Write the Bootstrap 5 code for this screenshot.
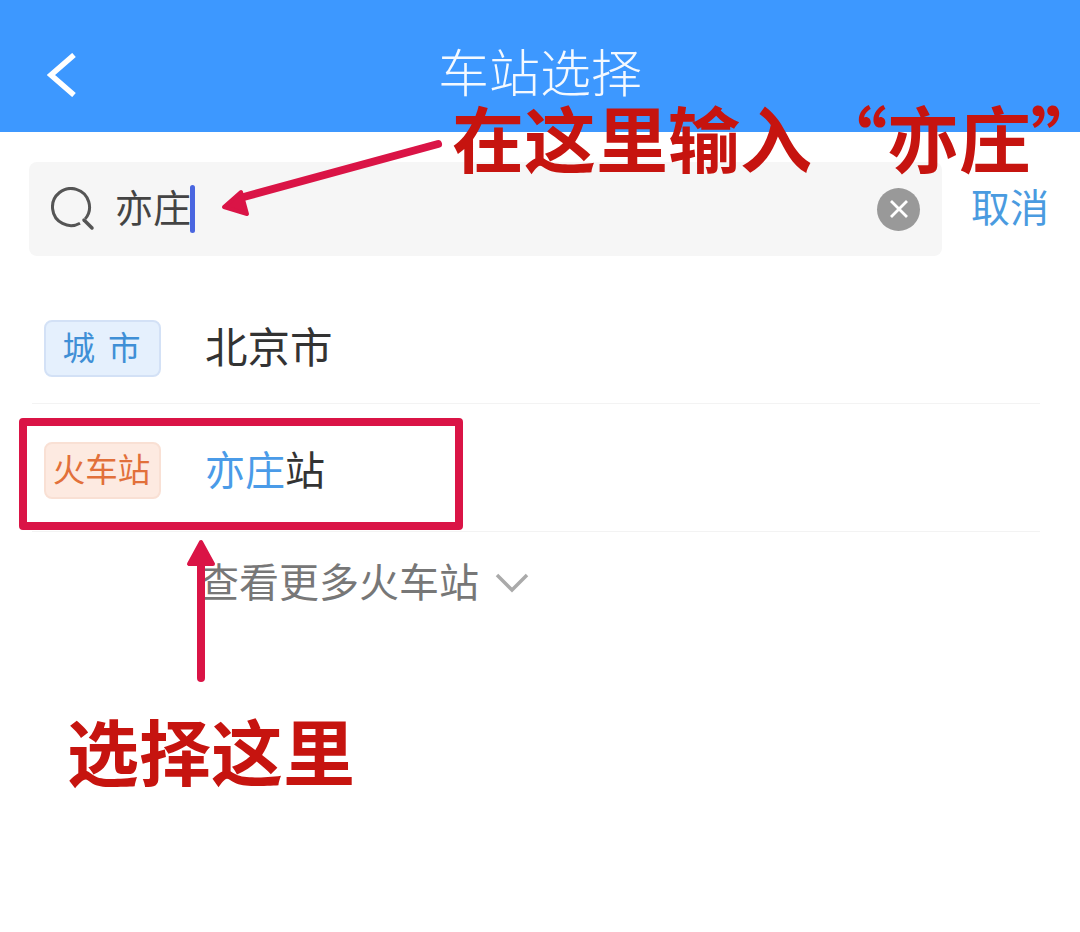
<html>
<head>
    <title>车站选择</title>
    <link href="https://cdn.jsdelivr.net/npm/bootstrap@5.3.3/dist/css/bootstrap.min.css" rel="stylesheet">
    <script src="https://cdn.jsdelivr.net/npm/bootstrap@5.3.3/dist/js/bootstrap.bundle.min.js"></script>
    <style>
        body {
            width: 1080px;
            height: 932px;
            overflow: hidden;
            background: #fff;
            font-family: "Liberation Sans", "Noto Sans CJK SC", sans-serif;
            color: #333;
        }
        .top-bar {
            height: 132px;
            background-color: #3d98ff;
            padding: 18px 0 0 47px;
        }
        .top-title {
            font-size: 51px;
            line-height: 64px;
            font-weight: 300;
            color: #f4f9ff;
            margin-left: 361px;
        }
        .search-row {
            padding: 30px 31px 0 29px;
        }
        .search-box {
            width: 913px;
            height: 94px;
            background: #f6f6f6;
            border-radius: 8px;
            padding: 0 22px;
        }
        .search-text {
            font-size: 38px;
            line-height: 48px;
            color: #444;
            margin-left: 20px;
        }
        .search-caret {
            width: 5px;
            height: 48px;
            border-radius: 3px;
            background: #4a66e0;
            margin-left: -1px;
        }
        .clear-btn {
            width: 43px;
            height: 43px;
            border-radius: 50%;
            background: #999;
        }
        .cancel-link {
            font-size: 39px;
            line-height: 48px;
            color: #4a9be0;
        }
        .result-row {
            height: 128px;
            margin: 0 40px 0 32px;
            padding-left: 12px;
            border-bottom: 1px solid #f3f3f3;
        }
        .first-row {
            height: 148px;
            padding-top: 38px;
        }
        .second-row {
            padding-top: 6px;
        }
        .tag-box {
            width: 117px;
            height: 57px;
            border-radius: 8px;
            font-size: 32.5px;
            line-height: 55px;
            text-align: center;
            margin-right: 44px;
            flex-shrink: 0;
        }
        .tag-city {
            background: #e5f0fd;
            border: 2px solid #d3e1f6;
            color: #3f8fd6;
            word-spacing: 4px;
            padding-right: 2px;
        }
        .tag-train {
            background: #fdeae1;
            border: 2px solid #f9e0d4;
            color: #e2703a;
            padding-right: 2px;
        }
        .result-name {
            font-size: 40px;
            line-height: 56px;
            color: #333;
        }
        .city-name {
            font-size: 42.5px;
        }
        .hit-word {
            color: #4a9be8;
        }
        .more-row {
            padding: 26px 0 0 199px;
            font-size: 40px;
            line-height: 50px;
            color: #777;
        }
        /* the red marks drawn over the screenshot */
        .mark-layer {
            position: absolute;
            left: 0;
            top: 0;
        }
        .note-text {
            position: absolute;
            font-family: "Noto Sans CJK SC", sans-serif;
            font-weight: 700;
            font-size: 72px;
            line-height: 80px;
            color: #c6140f;
            white-space: nowrap;
        }
        .note-top {
            left: 452px;
            top: 96px;
        }
        .note-quote {
            font-feature-settings: "palt";
        }
        .quote-open {
            margin-left: 39px;
        }
        .note-bottom {
            left: 67px;
            top: 709px;
        }
        .pick-box {
            position: absolute;
            left: 19px;
            top: 418px;
            width: 444px;
            height: 112px;
            border: 8px solid #da1446;
            border-radius: 4px;
        }
    </style>
</head>
<body class="position-relative">
    <div class="top-bar d-flex align-items-center">
        <svg width="30" height="44" viewBox="0 0 30 44"><path d="M27 2 L4 22 L27 42" fill="none" stroke="#fff" stroke-width="5.5"/></svg>
        <div class="top-title">车站选择</div>
    </div>

    <div class="search-row d-flex align-items-center justify-content-between">
        <div class="search-box d-flex align-items-center">
            <svg width="44" height="44" viewBox="0 0 44 44"><path d="M29 36.2 A18.5 18.5 0 1 1 34.2 31.9" fill="none" stroke="#555" stroke-width="3"/><path d="M33 33 L41 41" stroke="#555" stroke-width="3.5" stroke-linecap="round"/></svg>
            <span class="search-text">亦庄</span>
            <span class="search-caret"></span>
            <span class="clear-btn ms-auto d-flex align-items-center justify-content-center">
                <svg width="20" height="20" viewBox="0 0 20 20"><path d="M2 2 L18 18 M18 2 L2 18" stroke="#fff" stroke-width="2.8"/></svg>
            </span>
        </div>
        <span class="cancel-link">取消</span>
    </div>

    <div class="result-row first-row d-flex align-items-center">
        <span class="tag-box tag-city">城 市</span>
        <span class="result-name city-name">北京市</span>
    </div>
    <div class="result-row second-row d-flex align-items-center">
        <span class="tag-box tag-train">火车站</span>
        <span class="result-name"><span class="hit-word">亦庄</span>站</span>
    </div>
    <div class="more-row d-flex align-items-center">
        查看更多火车站
        <svg class="ms-3" width="34" height="22" viewBox="0 0 34 22"><path d="M2 3 L17 18 L32 3" fill="none" stroke="#aaa" stroke-width="3.5"/></svg>
    </div>

    <div class="pick-box"></div>
    <svg class="mark-layer" width="1080" height="932" viewBox="0 0 1080 932">
        <path d="M438 144 L240 198" stroke="#da1446" stroke-width="8" stroke-linecap="round"/>
        <path d="M224 207 L241 192 L247 214 Z" fill="#da1446" stroke="#da1446" stroke-width="4" stroke-linejoin="round"/>
        <path d="M201 678 L201 560" stroke="#da1446" stroke-width="8" stroke-linecap="round"/>
        <path d="M201 542 L189 564 L213 564 Z" fill="#da1446" stroke="#da1446" stroke-width="4" stroke-linejoin="round"/>
    </svg>
    <div class="note-text note-top">在这里输入<span class="note-quote quote-open">“</span>亦庄<span class="note-quote">”</span></div>
    <div class="note-text note-bottom">选择这里</div>
</body>
</html>
